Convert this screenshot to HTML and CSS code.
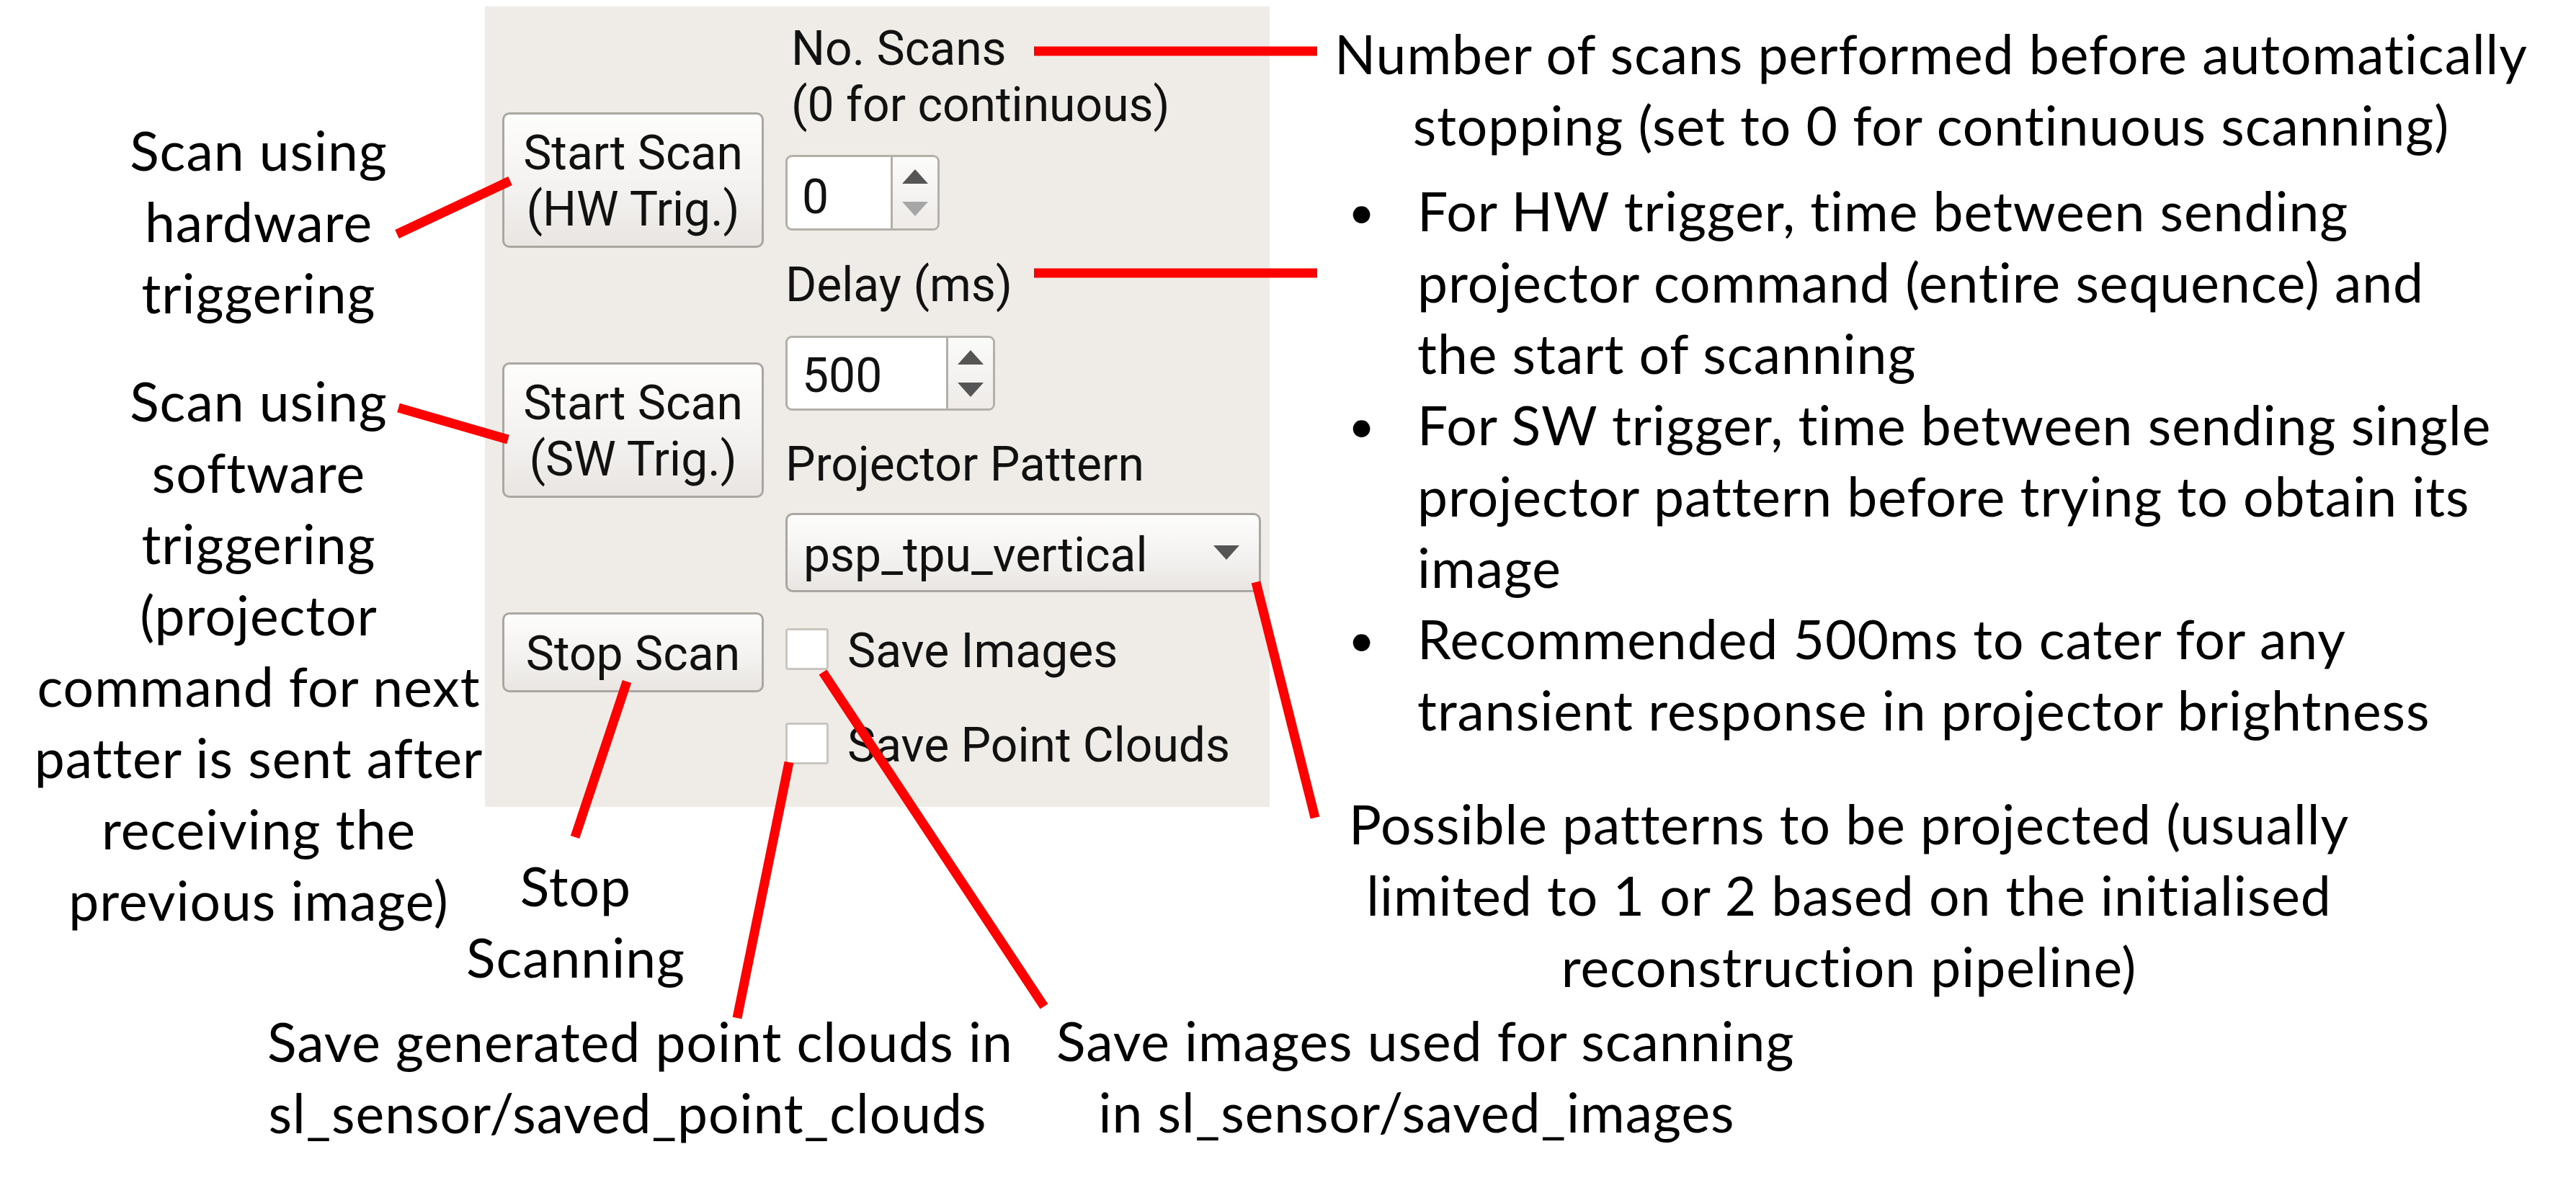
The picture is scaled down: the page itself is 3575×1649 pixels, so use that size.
FILE: index.html
```html
<!DOCTYPE html>
<html lang="en">
<head>
<meta charset="utf-8">
<title>Scan controls</title>
<link rel="stylesheet" href="styles.css">
</head>
<body>
<div class="canvas">
  <div class="panel">
    <div class="col-left">
      <div class="btn btn-tall">Start Scan<br>(HW Trig.)</div>
      <div class="btn btn-tall btn-gap">Start Scan<br>(SW Trig.)</div>
      <div class="btn btn-short btn-gap">Stop Scan</div>
    </div>
    <div class="col-right">
      <div class="lbl lbl-scans">No. Scans<br>(0 for continuous)</div>
      <div class="spin spin-1">
        <div class="spin-field">0</div>
        <div class="spin-btns">
          <span class="tri-up"></span>
          <span class="tri-down tri-off"></span>
        </div>
      </div>
      <div class="lbl lbl-delay">Delay (ms)</div>
      <div class="spin spin-2">
        <div class="spin-field">500</div>
        <div class="spin-btns">
          <span class="tri-up"></span>
          <span class="tri-down"></span>
        </div>
      </div>
      <div class="lbl lbl-pattern">Projector Pattern</div>
      <div class="combo">
        <span class="combo-text">psp_tpu_vertical</span>
        <span class="tri-down combo-arrow"></span>
      </div>
      <div class="check check-1"><span class="box"></span><span class="check-text">Save Images</span></div>
      <div class="check check-2"><span class="box"></span><span class="check-text">Save Point Clouds</span></div>
    </div>
  </div>

  <div class="note note-hw">Scan using<br>hardware<br>triggering</div>
  <div class="note note-sw">Scan using<br>software<br>triggering<br>(projector<br>command for next<br>patter is sent after<br>receiving the<br>previous image)</div>
  <div class="note note-stop">Stop<br>Scanning</div>
  <div class="note note-pc">Save generated point clouds in<br>sl_sensor/saved_point_clouds</div>
  <div class="note note-img">Save images used for scanning<br>in sl_sensor/saved_images</div>
  <div class="note note-num">Number of scans performed before automatically<br>stopping (set to 0 for continuous scanning)</div>
  <ul class="bullets">
    <li><span class="dot">•</span><span class="btext">For HW trigger, time between sending<br>projector command (entire sequence) and<br>the start of scanning</span></li>
    <li><span class="dot">•</span><span class="btext">For SW trigger, time between sending single<br>projector pattern before trying to obtain its<br>image</span></li>
    <li><span class="dot">•</span><span class="btext">Recommended 500ms to cater for any<br>transient response in projector brightness</span></li>
  </ul>
  <div class="note note-pat">Possible patterns to be projected (usually<br>limited to 1 or 2 based on the initialised<br>reconstruction pipeline)</div>

  <svg class="connectors" width="3575" height="1649" viewBox="0 0 3575 1649">
    <g stroke="#ff0000" stroke-width="13" stroke-linecap="butt" fill="none">
      <line x1="1435" y1="71" x2="1828" y2="71"/>
      <line x1="1435" y1="379" x2="1828" y2="379"/>
      <line x1="551" y1="325" x2="708" y2="251"/>
      <line x1="553" y1="566" x2="705" y2="610"/>
      <line x1="870" y1="946" x2="798" y2="1162"/>
      <line x1="1095" y1="1058" x2="1023" y2="1413"/>
      <line x1="1142" y1="933" x2="1449" y2="1397"/>
      <line x1="1743" y1="808" x2="1825" y2="1135"/>
    </g>
  </svg>
</div>
</body>
</html>
```

FILE: styles.css
```css
html, body {
  margin: 0;
  padding: 0;
  background: #ffffff;
}

.canvas {
  position: relative;
  width: 3575px;
  height: 1649px;
  overflow: hidden;
  background: #ffffff;
}

/* ---------- Qt panel ---------- */
.panel {
  margin-left: 673px;
  position: relative;
  top: 9px;
  width: 1089px;
  height: 1111px;
  background: #efebe7;
  display: flex;
  gap: 30px;
  padding-left: 24px;
  box-sizing: border-box;
  font-family: Roboto, "Open Sans", sans-serif;
  font-size: 66px;
  font-weight: 400;
  line-height: 78px;
  color: #111111;
}

.col-left {
  width: 363px;
  display: flex;
  flex-direction: column;
  padding-top: 147px;
}

.btn {
  box-sizing: border-box;
  border: 3px solid #aaa6a1;
  border-radius: 10px;
  background: linear-gradient(#fdfdfc, #f3f1ef 60%, #e8e5e2);
  box-shadow: inset 0 2px 0 #ffffff;
  display: flex;
  align-items: center;
  justify-content: center;
  text-align: center;
  white-space: nowrap;
  padding-top: 4px;
}

.btn-tall { height: 188px; }
.btn-short { height: 111px; }
.btn-gap { margin-top: 159px; }

.col-right {
  width: 660px;
  display: flex;
  flex-direction: column;
  padding-top: 20px;
}

.lbl { white-space: nowrap; }
.lbl-scans { padding-left: 8px; }
.lbl-delay { margin-top: 37px; }
.lbl-pattern { margin-top: 36px; }

.spin {
  box-sizing: border-box;
  display: flex;
  border: 3px solid #b3afa9;
  border-radius: 9px;
  background: #ffffff;
  overflow: hidden;
}
.spin-1 { width: 214px; height: 105px; margin-top: 30px; }
.spin-2 { width: 291px; height: 104px; margin-top: 31px; }

.spin-field {
  flex: 1;
  padding-left: 20px;
  padding-top: 12px;
  display: flex;
  align-items: center;
}
.spin-2 .spin-field { padding-top: 8px; }

.spin-btns {
  width: 62px;
  border-left: 3px solid #b3afa9;
  background: linear-gradient(#fbfbfa, #eeebe8);
  display: flex;
  flex-direction: column;
  align-items: center;
  justify-content: center;
  gap: 25px;
}

.tri-up, .tri-down {
  display: block;
  width: 0;
  height: 0;
  border-left: 18px solid transparent;
  border-right: 18px solid transparent;
}
.tri-up { border-bottom: 20px solid #555555; }
.tri-down { border-top: 20px solid #555555; }
.tri-off { border-top-color: #a6a6a6; }

.combo {
  box-sizing: border-box;
  width: 660px;
  height: 110px;
  margin-top: 28px;
  border: 3px solid #aaa6a1;
  border-radius: 10px;
  background: linear-gradient(#fdfdfc, #f3f1ef 60%, #e8e5e2);
  box-shadow: inset 0 2px 0 #ffffff;
  display: flex;
  align-items: center;
  justify-content: space-between;
  padding: 8px 27px 0 22px;
}
.combo-arrow { margin-top: -8px; }

.check {
  display: flex;
  align-items: center;
  height: 58px;
  gap: 26px;
}
.check-1 { margin-top: 50px; }
.check-2 { margin-top: 73px; }

.box {
  box-sizing: border-box;
  width: 60px;
  height: 58px;
  background: #ffffff;
  border: 3px solid #c9c5c0;
  border-radius: 4px;
}
.check-text {
  white-space: nowrap;
  line-height: 58px;
  padding-top: 6px;
}

/* ---------- annotations ---------- */
.note, .bullets {
  position: absolute;
  margin: 0;
  font-family: Lato, "Open Sans", sans-serif;
  font-size: 75px;
  letter-spacing: 1px;
  line-height: 99px;
  color: #000000;
  white-space: nowrap;
}
.note { text-align: center; }

.note-hw   { left: 0;     top: 159px;  width: 718px; }
.note-sw   { left: 0;     top: 507px;  width: 718px; }
.note-stop { left: 599px; top: 1180px; width: 400px; }
.note-pc   { left: 371px; top: 1396px; width: 1000px; }
.note-img  { left: 1466px; top: 1395px; width: 1000px; }
.note-num  { left: 1830px; top: 25px;  width: 1700px; }
.note-pat  { left: 1866px; top: 1094px; width: 1400px; }

.bullets {
  left: 1871px;
  top: 243px;
  padding: 0;
  list-style: none;
}
.bullets li {
  display: flex;
}
.dot {
  width: 96px;
  flex: none;
  font-size: 64px;
}

.connectors {
  position: absolute;
  left: 0;
  top: 0;
  pointer-events: none;
}
```
